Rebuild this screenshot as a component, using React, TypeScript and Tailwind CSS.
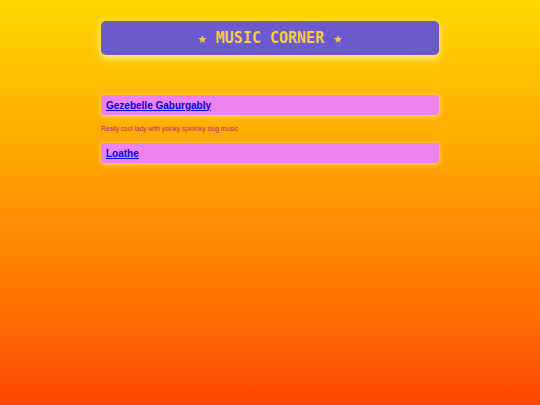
import React from "react";

export default function App() {
  return (
    <div className="min-h-[405px] w-full bg-gradient-to-b from-[#FFD700] to-[#FF4500] pt-[21px]">
      <div className="mx-auto w-[338px]">
        <div className="flex h-[34px] items-center justify-center rounded-[5px] bg-[#6A5ACD] shadow-[0_3px_8px_rgba(255,250,180,0.9)]">
          <h1 className="font-['DejaVu_Sans_Mono',monospace] text-[15px] font-bold text-[#F5CE45]">
            ★ MUSIC CORNER ★
          </h1>
        </div>
        <div className="mt-[40px] flex h-[20px] items-center rounded-[3px] bg-[#EE82EE] px-[5px] shadow-[0_1px_5px_rgba(255,240,150,0.9)]">
          <a href="#" className="font-['Liberation_Sans',Arial,sans-serif] text-[10px] font-bold text-[#0000EE] underline">
            Gezebelle Gaburgably
          </a>
        </div>
        <p className="mt-[9px] font-['Liberation_Sans',Arial,sans-serif] text-[6.5px] leading-[9px] text-[#C71585]">
          Really cool lady with yoinky sploinky slug music
        </p>
        <div className="mt-[10px] flex h-[20px] items-center rounded-[3px] bg-[#EE82EE] px-[5px] shadow-[0_1px_5px_rgba(255,240,150,0.9)]">
          <a href="#" className="font-['Liberation_Sans',Arial,sans-serif] text-[10px] font-bold text-[#0000EE] underline">
            Loathe
          </a>
        </div>
      </div>
    </div>
  );
}
